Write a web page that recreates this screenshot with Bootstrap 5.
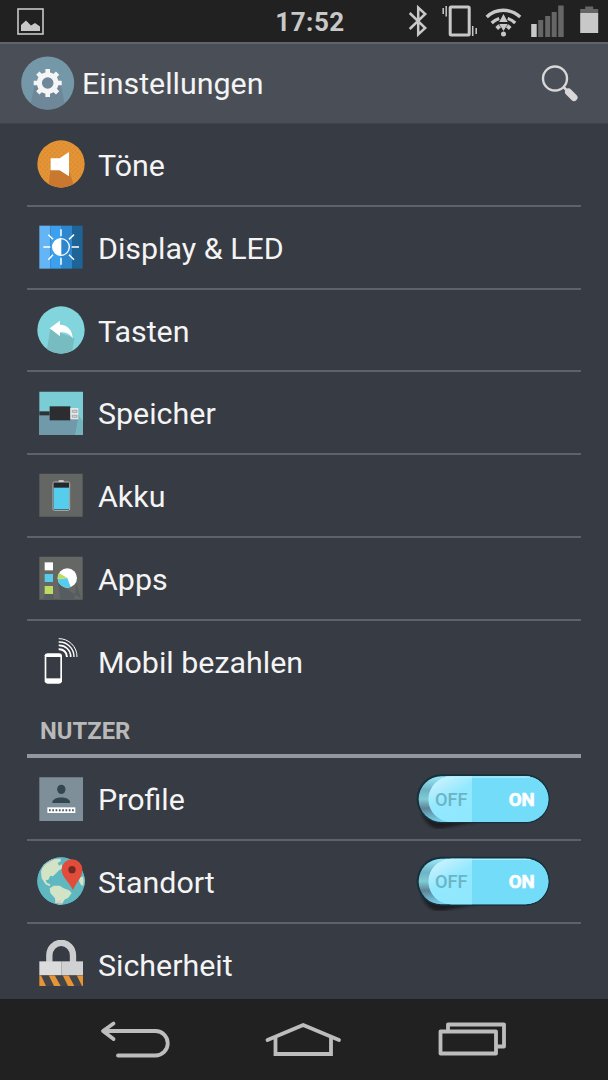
<!DOCTYPE html>
<html lang="de">
<head>
    <meta charset="UTF-8">
    <meta name="viewport" content="width=device-width, initial-scale=1.0">
    <title>Einstellungen</title>
    <link href="https://cdn.jsdelivr.net/npm/bootstrap@5.3.3/dist/css/bootstrap.min.css" rel="stylesheet">
    <style>
        body {
            background-color: #373b43;
            color: #f4f4f4;
            font-family: Roboto, "Liberation Sans", sans-serif;
            line-height: 1;
        }
        svg {
            display: block;
            flex-shrink: 0;
        }
        .status-bar {
            display: grid;
            grid-template-columns: 1fr auto 1fr;
            height: 42px;
            padding: 0 9px 0 17px;
            background-color: #212121;
        }
        .clock {
            font-size: 26px;
            font-weight: 700;
            letter-spacing: .5px;
            color: #c8c8c8;
            margin: 2px 0 0 4px;
        }
        .title-bar {
            height: 82px;
            padding: 0 29px 2px 21px;
            background-color: #4a4e56;
            border-top: 2px solid #60636a;
            border-bottom: 1px solid #3f424b;
        }
        .title-bar h1 {
            font-size: 30.4px;
            font-weight: 400;
            margin: 4px 0 0 7px;
        }
        .settings {
            padding: 0 27px;
            min-height: 0;
        }
        .setting {
            height: 82.75px;
            padding: 0 26.5px 0 9.5px;
            border-bottom: 2px solid #5e626b;
            flex-shrink: 0;
        }
        .setting.plain {
            border-bottom-color: transparent;
        }
        .setting-name {
            font-size: 30.4px;
            margin: 4px 0 0 13.5px;
        }
        .section-title {
            height: 55px;
            padding: 17px 0 0 13px;
            font-size: 23.8px;
            font-weight: 700;
            color: #b9b9b9;
            border-bottom: 4px solid #9297a1;
            flex-shrink: 0;
        }
        .nav-keys {
            height: 81px;
            background-color: #212121;
        }
    </style>
</head>

<body class="d-flex flex-column vh-100 overflow-hidden">
    <header class="flex-shrink-0">
        <div class="status-bar align-items-center">
            <svg width="27" height="27" viewBox="0 0 27 27">
                <rect x="1" y="1" width="25" height="25" fill="none" stroke="#c8c8c8" stroke-width="1.6"/>
                <path d="M4 23V17L9 12.500L14 17.500L18 15L23 18.500V23Z" fill="#c8c8c8"/>
            </svg>
            <div class="clock">17:52</div>
            <!-- Bluetooth, Vibration, WLAN, Netz, Akku -->
            <svg class="ms-auto" width="193" height="42" viewBox="0.8 0 193 42">
                <g fill="none" stroke="#c8c8c8">
                    <path d="M4.500 13L20 28L13 34.500V7.500L20 14L4.500 29" stroke-width="2.5"/>
                    <rect x="45" y="7" width="19" height="28" rx="1" stroke-width="3"/>
                    <path d="M38 8V14M41 6V16.500M67.500 26V36M71 28V34" stroke-width="1.500"/>
                    <path d="M81.500 17C91 8 105 8 115 17" stroke-width="3.300"/>
                    <path d="M86.500 23C89 20.500 91 19.500 94 18.500M102.500 18.500C106 19.500 108 21 110 23" stroke-width="3.300"/>
                    <path d="M91.500 28.500L94.500 25.800M105 28.500L102 25.800" stroke-width="4"/>
                </g>
                <g fill="#c8c8c8">
                    <path d="M94 22L98.300 14L102.500 22ZM94 24L98.300 31L102.500 24Z"/>
                    <circle cx="98.300" cy="34" r="2.500"/>
                    <rect x="126" y="24" width="5.500" height="13"/>
                    <rect x="175" y="13" width="18" height="20"/>
                </g>
                <g fill="#666">
                    <rect x="133" y="20" width="5" height="17"/>
                    <rect x="140" y="16" width="5" height="21"/>
                    <rect x="146.500" y="12" width="5" height="25"/>
                    <rect x="153" y="5.500" width="5.500" height="31.500"/>
                    <path d="M175 13V9H180V6.500H188V9H193V13Z"/>
                </g>
            </svg>
        </div>
        <div class="title-bar d-flex align-items-center">
            <svg width="54" height="54" viewBox="0.3 0 54 54">
                <circle cx="27" cy="27" r="26.500" fill="#7598a8"/>
                <path d="M14 28L10 47.500A26.500 26.500 0 0 0 44 47.500L40 28Z" fill="#6e8799"/>
                <g stroke="#f5f5f5" fill="none">
                    <circle cx="27" cy="27" r="8.300" fill="#6e8799" stroke-width="5"/>
                    <path stroke-width="4.600" d="M27 13V18M27 36V41M13 27H18M36 27H41M17.100 17.100L20.500 20.500M33.500 33.500L36.900 36.900M17.100 36.900L20.500 33.500M33.500 20.500L36.900 17.100"/>
                </g>
            </svg>
            <h1>Einstellungen</h1>
            <svg class="ms-auto" width="39" height="38" viewBox="0 0 39 38" fill="none" stroke="#d8d8d8">
                <circle cx="15" cy="14.500" r="12" stroke-width="2.400"/>
                <path d="M23.500 23L27 26.500" stroke-width="2.500"/>
                <path d="M28.500 28L34 33.500" stroke-width="7" stroke-linecap="round"/>
            </svg>
        </div>
    </header>

    <main class="settings flex-grow-1 d-flex flex-column overflow-hidden">
        <div class="setting d-flex align-items-center">
            <svg width="48" height="48" viewBox="0 0 144 144">
                <defs>
                    <pattern id="dots" width="14" height="14" patternUnits="userSpaceOnUse">
                        <circle cx="3.500" cy="3.500" r="2.300" fill="#c9822e"/>
                        <circle cx="10.500" cy="10.500" r="2.300" fill="#c9822e"/>
                    </pattern>
                </defs>
                <circle cx="72" cy="72" r="71" fill="#e59435"/>
                <circle cx="72" cy="72" r="69" fill="url(#dots)"/>
                <path d="M41 88L35 132A71 71 0 0 0 109 132L97 95Z" fill="#c8782f"/>
                <path d="M41 55H68L96 36V109L68 91H41Z" fill="#fff"/>
            </svg>
            <div class="setting-name">Töne</div>
        </div>
        <div class="setting d-flex align-items-center">
            <svg width="48" height="48" viewBox="0 0 144 144">
                <path d="M7 8H40V137H7Z" fill="#64b5f6"/>
                <path d="M40 8H72V137H40Z" fill="#3ba0ed"/>
                <path d="M72 8H105V137H72Z" fill="#2c87cf"/>
                <path d="M105 8H137V137H105Z" fill="#1e6497"/>
                <circle cx="72" cy="72" r="25" fill="none" stroke="#fff" stroke-width="4"/>
                <path d="M73 46A26 26 0 0 0 73 98Z" fill="#fff"/>
                <path d="M72 19V40M72 104V125M19 72H40M104 72H126M34 35L48 49M96 95L111 110M34 110L48 95M96 49L111 35" stroke="#fff" stroke-width="4.500"/>
            </svg>
            <div class="setting-name">Display &amp; LED</div>
        </div>
        <div class="setting d-flex align-items-center">
            <svg width="48" height="48" viewBox="0 0 144 144">
                <circle cx="72" cy="72" r="71" fill="#82d5dc"/>
                <path d="M40 70L30 129A71 71 0 0 0 106 134L112 96Z" fill="#76bcc0"/>
                <path d="M38 67L69 44V56C92 57 107 72 107 98C99 83 88 79 69 79V91Z" fill="#fff"/>
            </svg>
            <div class="setting-name">Tasten</div>
        </div>
        <div class="setting d-flex align-items-center">
            <svg width="48" height="48" viewBox="0 0 144 144">
                <path d="M7 8H138V138H7Z" fill="#7accd5"/>
                <path d="M7 78H126L115 138H7Z" fill="#7099aa"/>
                <path d="M126 82L138 96V138H115Z" fill="#74b4bc"/>
                <path d="M7 67H38V79H7Z" fill="#303236"/>
                <path d="M38 52H100V94H38Z" fill="#2b2d31"/>
                <path d="M100 57H124V91H100Z" fill="#e6e6e6"/>
                <path d="M106 64H120V70H106ZM106 79H120V85H106Z" fill="#d6d6d6" stroke="#8e9294" stroke-width="2"/>
            </svg>
            <div class="setting-name">Speicher</div>
        </div>
        <div class="setting d-flex align-items-center">
            <svg width="48" height="48" viewBox="0 0 144 144">
                <path d="M7 8H137V137H7Z" fill="#646663"/>
                <path d="M65 28H80V34H65Z" fill="#e8e8e8"/>
                <rect x="48" y="33" width="50" height="85" rx="4" fill="#25282b" stroke="#b3b5b5" stroke-width="3"/>
                <path d="M50 50H96V115H50Z" fill="#55cdec"/>
            </svg>
            <div class="setting-name">Akku</div>
        </div>
        <div class="setting d-flex align-items-center">
            <svg width="48" height="48" viewBox="0 0 144 144">
                <path d="M7 8H137V137H7Z" fill="#656764"/>
                <path d="M23 120H48L52 137H20ZM64 88L70 137H112L118 88L134 137H137" fill="#555d60"/>
                <path d="M23 25H48V49H23Z" fill="#fff"/>
                <path d="M23 60H48V84H23Z" fill="#5bcaea"/>
                <path d="M23 96H48V120H23Z" fill="#bddb64"/>
                <circle cx="91" cy="72" r="29" fill="#fff"/>
                <path d="M91 72L62 76A29 29 0 0 0 101 99Z" fill="#55cdec"/>
                <path d="M91 72L66 57A29 29 0 0 0 62 76Z" fill="#bddb64"/>
            </svg>
            <div class="setting-name">Apps</div>
        </div>
        <div class="setting plain d-flex align-items-center">
            <svg width="48" height="48" viewBox="0 -3 144 144">
                <path d="M23 52Q24 46 32 46H66Q74 46 75 52V130Q74 137 66 137H32Q24 137 23 130Z" fill="#fff"/>
                <path d="M28 57H70V121H28Z" fill="#373b43"/>
                <g fill="none" stroke="#fff">
                    <path d="M65 34A23 23 0 0 1 90 57" stroke-width="6"/>
                    <path d="M65 22A34 34 0 0 1 101 57" stroke-width="5"/>
                    <path d="M65 12A44 44 0 0 1 111 57" stroke-width="4"/>
                    <path d="M65 2A54 54 0 0 1 120 57" stroke-width="3"/>
                </g>
            </svg>
            <div class="setting-name">Mobil bezahlen</div>
        </div>

        <div class="section-title">NUTZER</div>

        <div class="setting d-flex align-items-center">
            <svg width="48" height="48" viewBox="0 0 144 144">
                <path d="M7 7H138V138H7Z" fill="#7e8f99"/>
                <ellipse cx="73" cy="43" rx="12.500" ry="14" fill="#33474f"/>
                <path d="M46 84V80C50 63 96 63 99 80V84Z" fill="#33474f"/>
                <path d="M31 97H115V114H31Z" fill="#fff"/>
                <path d="M36 106H111" stroke="#46565e" stroke-width="6" stroke-dasharray="5 4.900"/>
            </svg>
            <div class="setting-name">Profile</div>
            <svg class="ms-auto" width="140" height="60" viewBox="0 1 420 180">
                <defs>
                    <linearGradient id="side" x1="0" y1="0" x2="0" y2="1">
                        <stop offset="0" stop-color="#9be9fb"/>
                        <stop offset=".3" stop-color="#6fb3c4"/>
                        <stop offset=".5" stop-color="#7fcbd3"/>
                        <stop offset=".7" stop-color="#5d8397"/>
                        <stop offset="1" stop-color="#79d4ee"/>
                    </linearGradient>
                    <linearGradient id="knob" x1="0" y1="0" x2=".55" y2="1">
                        <stop offset="0" stop-color="#d8f7ff"/>
                        <stop offset=".3" stop-color="#b4eefe"/>
                        <stop offset=".55" stop-color="#93e9ff"/>
                        <stop offset="1" stop-color="#90e8fe"/>
                    </linearGradient>
                    <filter id="soft" x="-20%" y="-60%" width="140%" height="240%">
                        <feGaussianBlur stdDeviation="5"/>
                    </filter>
                    <g id="switch">
                        <path d="M18 130C40 186 70 184 100 176L190 158Z" fill="#1a1d20" filter="url(#soft)"/>
                        <rect x="5" y="17" width="399" height="147" rx="73" fill="#14313c"/>
                        <rect x="11" y="23" width="389" height="137" rx="68" fill="url(#side)"/>
                        <path d="M109 23H332A68.500 68.500 0 0 1 332 160H109A68.500 68.500 0 0 1 109 23Z" fill="#72dcf9"/>
                        <path d="M171 23H109A68.500 68.500 0 0 0 109 160H171Z" fill="url(#knob)"/>
                        <path d="M90 25H345" stroke="#bff2ff" stroke-width="3"/>
                        <g font-family="Roboto, sans-serif" font-size="56">
                            <text x="60" y="112" textLength="98" lengthAdjust="spacingAndGlyphs" font-weight="500" fill="#6bb4c4">OFF</text>
                            <text x="281" y="112" textLength="78" lengthAdjust="spacingAndGlyphs" font-weight="700" fill="#fff" stroke="#fff" stroke-width="2">ON</text>
                        </g>
                    </g>
                </defs>
                <use href="#switch"/>
            </svg>
        </div>
        <div class="setting d-flex align-items-center">
            <svg width="48" height="48" viewBox="0 0 144 144">
                <clipPath id="globe"><circle cx="72" cy="72" r="71"/></clipPath>
                <circle cx="72" cy="72" r="71" fill="#5fb8c0"/>
                <g clip-path="url(#globe)">
                    <path d="M20 18L44 7L70 4L72 12L62 18L66 26L74 22L78 34L66 40L56 50L48 58L40 56L34 68L26 70L30 78L40 82L38 88L26 82L14 64L12 44Z" fill="#d3e4c6"/>
                    <path d="M38 94L50 86L68 86L80 94L96 100L104 108L94 122L82 128L74 144H56L54 124L40 108Z" fill="#d3e4c6"/>
                    <path d="M128 62L144 56V88L132 84L126 72Z" fill="#d3e4c6"/>
                    <path d="M28 16L44 7L50 10L34 20ZM54 134L72 128V144H54Z" fill="#d5d1c8"/>
                </g>
                <circle cx="72" cy="72" r="69.500" fill="none" stroke="#60b6c4" stroke-width="3"/>
                <path d="M108 100C102 80 74 62 74 38A31 31 0 0 1 136 38C136 62 114 80 108 100Z" fill="#e24c3b"/>
                <circle cx="105" cy="38" r="11" fill="#742923"/>
            </svg>
            <div class="setting-name">Standort</div>
            <svg class="ms-auto" width="140" height="60" viewBox="0 0 420 180">
                <use href="#switch"/>
            </svg>
        </div>
        <div class="setting d-flex align-items-center">
            <svg width="48" height="48" viewBox="0 -1 144 144">
                <clipPath id="stripes"><path d="M7 105H138V137H7Z"/></clipPath>
                <path d="M37 66V45A35 37 0 0 1 108 45V66" fill="none" stroke="#cbcdcf" stroke-width="19"/>
                <path d="M7 63H73V106H7Z" fill="#dcdcdc"/>
                <path d="M73 63H138V106H73Z" fill="#d0d1d2"/>
                <path d="M7 105H138V137H7Z" fill="#434548"/>
                <path clip-path="url(#stripes)" d="M-12 105H7L26 137H7ZM7 105H12L27 137H7ZM35 105H53L71 137H51ZM77 105H95L112 137H93ZM119 105H138V137H135Z" fill="#e59535"/>
            </svg>
            <div class="setting-name">Sicherheit</div>
        </div>
    </main>

    <!-- Navigationstasten -->
    <footer class="nav-keys flex-shrink-0">
        <svg width="608" height="81" viewBox="0.5 0 608 81" fill="none" stroke="#bdbdbd" stroke-width="3.800">
            <path d="M118.500 56.500H156A12.200 12.200 0 0 0 156 32H104M114 24.500L103.500 32L114 40" stroke-linecap="round" stroke-linejoin="round"/>
            <path d="M268 41L303.700 26L339.500 41" stroke-linecap="round" stroke-linejoin="round"/>
            <path d="M276 39V55H331.500V39"/>
            <path d="M448.500 32V25.500H504.500V47.500H498M441 32.500H496.500V54.500H441Z" stroke-linejoin="round"/>
        </svg>
    </footer>

    <script src="https://cdn.jsdelivr.net/npm/bootstrap@5.3.3/dist/js/bootstrap.bundle.min.js"></script>
</body>
</html>
